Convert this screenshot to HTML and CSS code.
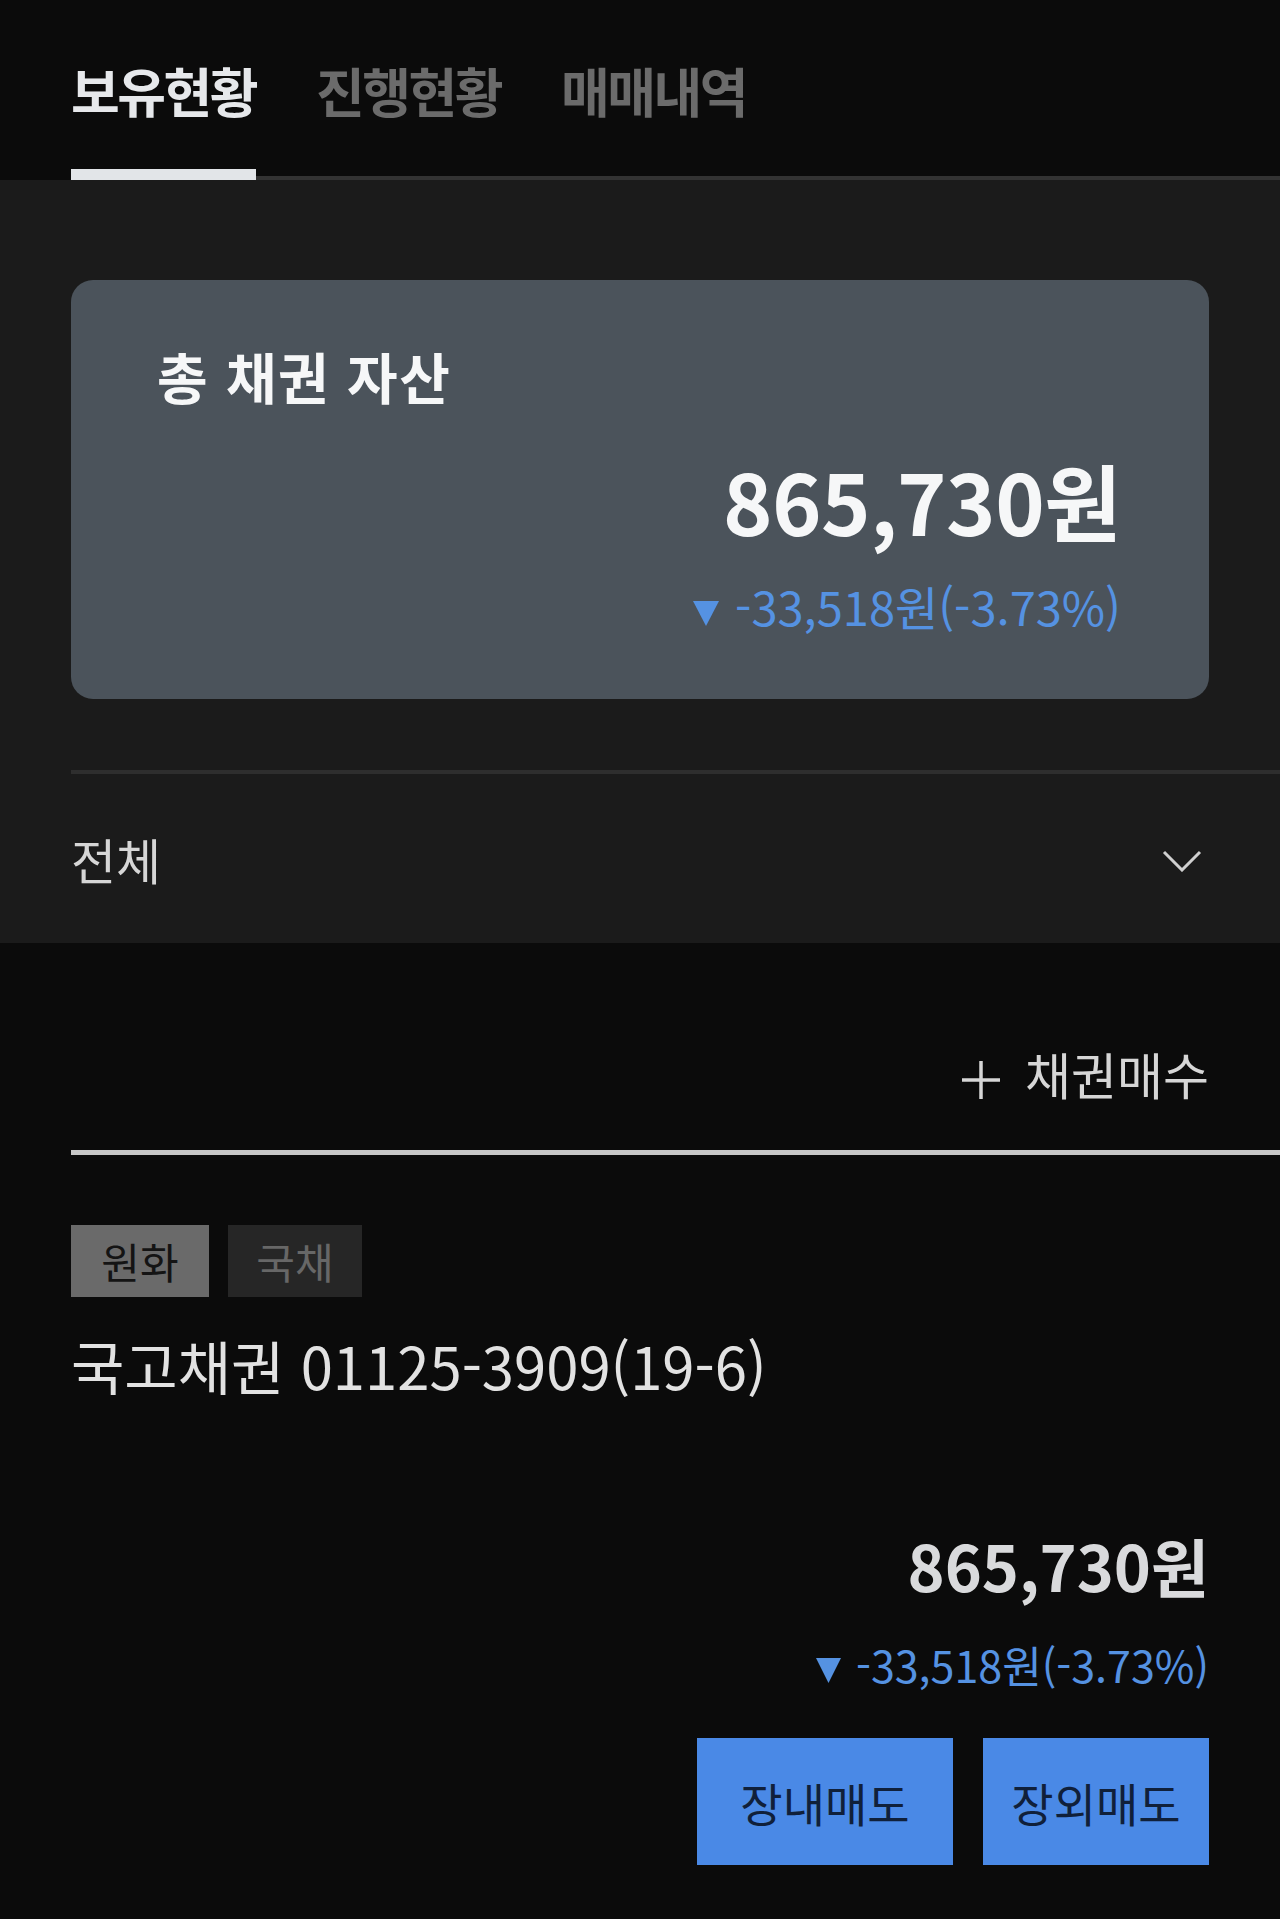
FILE: index.html
```html
<!DOCTYPE html>
<html lang="ko">
<head>
    <meta charset="UTF-8">
    <meta name="viewport" content="width=device-width, initial-scale=1.0">
    <title>보유현황</title>
    <link rel="stylesheet" href="styles.css">
</head>
<body>

    <nav class="tabs">
        <div class="tab active">보유현황</div>
        <div class="tab">진행현황</div>
        <div class="tab">매매내역</div>
    </nav>

    <section class="summary">
        <div class="asset-card">
            <h2 class="card-title">총 채권 자산</h2>
            <div class="total">865,730원</div>
            <div class="change">
                <svg class="down" width="28" height="27" viewBox="0 0 28 27"><path d="M1 1 H27 L14 26 Z" fill="currentColor"/></svg>
                -33,518원(-3.73%)
            </div>
        </div>

        <div class="filter">
            <span class="filter-label">전체</span>
            <svg class="chevron" width="40" height="22" viewBox="0 0 40 22">
                <path d="M2 2 L20 20 L38 2" fill="none" stroke="currentColor" stroke-width="3"/>
            </svg>
        </div>
    </section>

    <section class="holdings">
        <div class="buy-row">
            <span class="buy">
                <svg class="plus" width="40" height="40" viewBox="0 0 40 40">
                    <path d="M20 1 V39 M1 20 H39" fill="none" stroke="currentColor" stroke-width="3.5"/>
                </svg>
                채권매수
            </span>
        </div>

        <div class="bond">
            <div class="tags">
                <span class="tag tag-currency">원화</span>
                <span class="tag tag-type">국채</span>
            </div>
            <div class="bond-name">국고채권 01125-3909(19-6)</div>
            <div class="bond-amount">865,730원</div>
            <div class="bond-change">
                <svg class="down" width="27" height="27" viewBox="0 0 27 27"><path d="M1 1 H26 L13.5 26 Z" fill="currentColor"/></svg>
                -33,518원(-3.73%)
            </div>
            <div class="actions">
                <button class="sell-button sell-in">장내매도</button>
                <button class="sell-button sell-out">장외매도</button>
            </div>
        </div>
    </section>

</body>
</html>
```

FILE: styles.css
```css
body {
    font-family: 'Noto Sans CJK KR', 'Noto Sans', sans-serif;
    background-color: #0b0b0b;
    color: #e2e2e2;
    margin: 0;
    padding: 0;
}

/* top tabs */
.tabs {
    display: flex;
    gap: 60px;
    margin-left: 71px;
    padding-top: 60px;
    border-bottom: 4px solid #333;
}

.tab {
    font-size: 53px;
    font-weight: 700;
    letter-spacing: -2.5px;
    line-height: 60px;
    color: #6b6b6b;
    padding-bottom: 49px;
    border-bottom: 11px solid transparent;
    margin-bottom: -4px;
}

.tab.active {
    color: #e6e8eb;
    border-bottom-color: #e2e5e8;
}

/* summary block */
.summary {
    background-color: #1b1b1b;
    padding-top: 100px;
}

.asset-card {
    margin: 0 71px;
    height: 419px;
    box-sizing: border-box;
    padding: 63px 88px 0 86px;
    background-color: #4b535b;
    border-radius: 22px;
    color: #f6f7f8;
}

.card-title {
    margin: 0;
    font-size: 55px;
    font-weight: 700;
    letter-spacing: 1.5px;
    line-height: 64px;
}

.total {
    margin-top: 48px;
    font-size: 84px;
    font-weight: 700;
    letter-spacing: -0.5px;
    line-height: 90px;
    text-align: right;
}

.change {
    margin-top: 36px;
    font-size: 47px;
    line-height: 50px;
    text-align: right;
    color: #5592e2;
}

.down {
    vertical-align: -1px;
    margin-right: 2px;
}

.filter {
    margin-top: 71px;
    margin-left: 71px;
    height: 169px;
    border-top: 4px solid #2e2e2e;
    padding-right: 78px;
    display: flex;
    align-items: center;
    justify-content: space-between;
}

.filter-label {
    font-size: 49px;
    line-height: 60px;
    color: #d6d6d6;
}

.chevron {
    color: #d0d0d0;
    margin-top: 4px;
}

/* holdings list */
.holdings {
    background-color: #0b0b0b;
}

.buy-row {
    margin-left: 71px;
    padding: 100px 71px 47px 0;
    border-bottom: 5px solid #c8c8c8;
    text-align: right;
}

.buy {
    font-size: 50px;
    line-height: 60px;
    color: #d6d6d6;
}

.plus {
    vertical-align: -5px;
    margin-right: 10px;
}

.bond {
    padding: 70px 71px 54px 71px;
}

.tags {
    display: flex;
    gap: 19px;
}

.tag {
    height: 72px;
    line-height: 72px;
    font-size: 42px;
    text-align: center;
}

.tag-currency {
    width: 138px;
    background-color: #6a6a6a;
    color: #141414;
}

.tag-type {
    width: 134px;
    background-color: #262626;
    color: #676767;
}

.bond-name {
    margin-top: 36px;
    font-size: 58px;
    line-height: 64px;
    color: #e2e2e2;
}

.bond-amount {
    margin-top: 132px;
    font-size: 63px;
    font-weight: 700;
    line-height: 72px;
    text-align: right;
    color: #d9dadc;
}

.bond-change {
    margin-top: 39px;
    font-size: 43px;
    line-height: 48px;
    text-align: right;
    color: #5592e2;
}

.actions {
    display: flex;
    justify-content: flex-end;
    gap: 30px;
    margin-top: 50px;
}

.sell-button {
    height: 127px;
    border: none;
    border-radius: 0;
    background-color: #4a89e6;
    color: #10203a;
    font-family: inherit;
    font-size: 46px;
    padding: 0;
}

.sell-in {
    width: 256px;
}

.sell-out {
    width: 226px;
}
```
